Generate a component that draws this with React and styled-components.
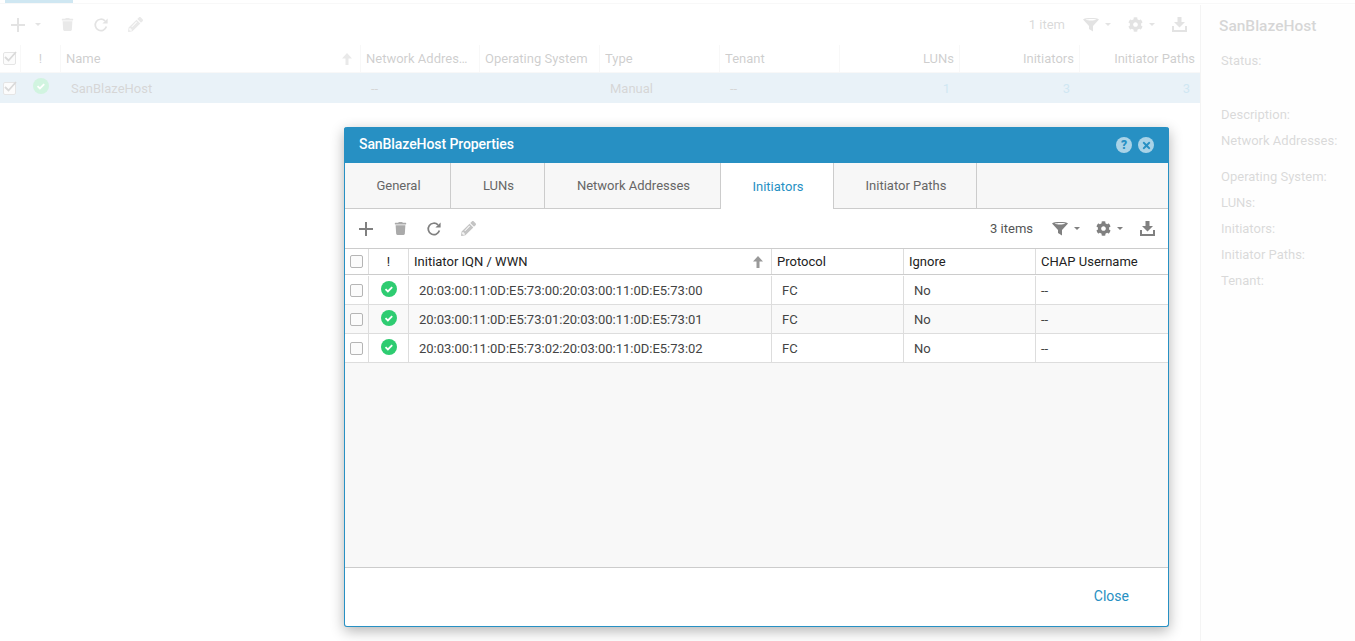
import React from "react";
import styled, { createGlobalStyle } from "styled-components";
import { FaTrash, FaPencilAlt, FaCog, FaTimes } from "react-icons/fa";

const Global = createGlobalStyle`
  html, body { margin: 0; padding: 0; background: #fff; }
  body { font-family: Roboto, "Liberation Sans", sans-serif; font-size: 13px; color: #333; overflow: hidden; }
  * { box-sizing: border-box; }
`;

const Page = styled.div`
  position: relative;
  width: 1355px;
  height: 641px;
  overflow: hidden;
  background: #fff;
  display: flex;
  flex-direction: column;
`;
const TopStrip = styled.div`
  height: 4px;
  flex: none;
  border-bottom: 1px solid #ddd;
  padding-left: 5px;
`;
const TopTab = styled.div`
  width: 68px;
  height: 3px;
  background: #2790c3;
`;
const Main = styled.div`
  flex: 1;
  display: flex;
  min-height: 0;
`;
const ListArea = styled.div`
  width: 1200px;
  flex: none;
`;
const Toolbar = styled.div`
  height: ${p => p.$h}px;
  display: flex;
  align-items: center;
  padding: 0 ${p => p.$right}px 0 ${p => p.$left}px;
  color: #808080;
  background: #fff;
`;
const IconBtn = styled.span`
  width: ${p => p.$w || 34}px;
  height: 20px;
  display: inline-flex;
  align-items: center;
  justify-content: center;
  flex: none;
  color: ${p => p.$c || "#808080"};
`;
const Caret = styled.span`
  width: 0;
  height: 0;
  margin-left: ${p => p.$ml || 6}px;
  border-left: 3px solid transparent;
  border-right: 3px solid transparent;
  border-top: 3px solid #808080;
`;
const Spacer = styled.div`
  flex: 1;
`;
const Count = styled.span`
  color: #555;
  font-size: 13px;
  margin-right: ${p => p.$mr}px;
`;
const Grid = styled.div`
  display: grid;
  grid-template-columns: ${p => p.$cols};
  height: ${p => p.$h}px;
  background: ${p => p.$bg || "transparent"};
  border-bottom: ${p => p.$line ? "1px solid #ddd" : "none"};
`;
const HeadCell = styled.div`
  display: flex;
  align-items: center;
  justify-content: ${p => p.$align === "center" ? "center" : p.$align === "right" ? "flex-end" : "space-between"};
  padding: 0 5px;
  font-size: 13px;
  font-weight: 400;
  color: #222;
  white-space: nowrap;
  overflow: hidden;
  min-width: 0;
  border-right: ${p => p.$last ? "none" : "1px solid #ddd"};
`;
const HeadLabel = styled.span`
  overflow: hidden;
  text-overflow: ellipsis;
  min-width: 0;
`;
const Cell = styled.div`
  display: flex;
  align-items: center;
  justify-content: ${p => p.$align === "center" ? "center" : p.$align === "right" ? "flex-end" : "flex-start"};
  padding: ${p => p.$pad || "0 10px"};
  font-size: 13px;
  color: ${p => p.$link ? "#2790c3" : "#444"};
  white-space: nowrap;
  border-right: ${p => p.$line ? "1px solid #ddd" : "none"};
`;
const Box = styled.span`
  width: 13px;
  height: 13px;
  flex: none;
  display: inline-flex;
  align-items: center;
  justify-content: center;
  background: #fbfbfb;
  border: 1px solid #b5b5b5;
  border-radius: 2px;
`;
const TickBox = styled(Box)`
  position: relative;
  margin-right: 2px;
  background: #f2f2f2;
  border-color: #888;
`;
const TickMark = styled.svg`
  position: absolute;
  left: -1px;
  top: -3px;
`;
const SidePanel = styled.aside`
  flex: 1;
  background: #f8f8f8;
  border-left: 1px solid #ccc;
  margin-top: 1px;
  padding: 11px 0 0 18px;
`;
const SideTitle = styled.div`
  font-size: 15.5px;
  font-weight: 500;
  color: #444;
  height: 20px;
  line-height: 20px;
  margin-bottom: 16px;
`;
const SideLabel = styled.div`
  height: 26px;
  line-height: 18px;
  font-size: 13px;
  color: #555;
  padding-left: 2px;
  margin-bottom: ${p => p.$mb || 0}px;
`;
const Scrim = styled.div`
  position: absolute;
  inset: 0;
  background: rgba(255, 255, 255, .78);
`;
const Modal = styled.section`
  position: absolute;
  left: 344px;
  top: 127px;
  width: 825px;
  height: 500px;
  background: #fff;
  border: 1px solid #2790c3;
  border-top: none;
  border-radius: 3px;
  box-shadow: 0 4px 14px rgba(0, 0, 0, .3);
  display: flex;
  flex-direction: column;
`;
const ModalHead = styled.header`
  height: 36px;
  flex: none;
  margin: 0 -1px;
  padding: 0 15px 2px 15px;
  background: #2790c3;
  border-radius: 3px 3px 0 0;
  display: flex;
  align-items: center;
  justify-content: space-between;
  color: #fff;
  font-size: 14px;
  font-weight: 500;
  letter-spacing: -.08px;
`;
const HeadIcons = styled.div`
  display: flex;
  gap: 6px;
  margin-top: 2px;
`;
const Round = styled.span`
  width: 16px;
  height: 16px;
  border-radius: 50%;
  background: #a9d3e7;
  color: #2790c3;
  display: inline-flex;
  align-items: center;
  justify-content: center;
  font-size: 12px;
  font-weight: 900;
`;
const Tabs = styled.nav`
  height: 46px;
  flex: none;
  display: flex;
  background: #f7f7f7;
  border-bottom: 1px solid #ccc;
`;
const Tab = styled.div`
  width: ${p => p.$w}px;
  height: ${p => p.$active ? 46 : 45}px;
  flex: none;
  display: flex;
  align-items: center;
  justify-content: center;
  padding-left: 2px;
  font-size: 13px;
  color: ${p => p.$active ? "#2790c3" : "#666"};
  background: ${p => p.$active ? "#fff" : "transparent"};
  border-right: 1px solid #ccc;
`;
const TableWrap = styled.div`
  flex: 1;
  min-height: 0;
  background: #f8f8f8;
  border-top: 1px solid #ccc;
`;
const ModalRow = styled(Grid)`
  background: ${p => p.$alt ? "#f9f9f9" : "#fff"};
  border-bottom: 1px solid #ddd;
  padding-top: ${p => p.$top || 0}px;
`;
const HeadGrid = styled(Grid)`
  background: #fff;
  border-bottom: 1px solid #ccc;
`;
const SortArrow = styled.svg`
  margin-right: 3px;
  flex: none;
`;
const Footer = styled.footer`
  height: 59px;
  flex: none;
  border-top: 1px solid #ccc;
  padding: 0 39px 2px 0;
  display: flex;
  align-items: center;
  justify-content: flex-end;
  color: #2790c3;
  font-size: 14px;
`;

const Plus = ({ s = 16 }) => (
  <svg width={s} height={s} viewBox="0 0 16 16"><path d="M7 1h2v6h6v2H9v6H7V9H1V7h6z" fill="currentColor" /></svg>
);
const Refresh = () => (
  <svg width="16" height="16" viewBox="0 0 16 16" fill="none">
    <path d="M13.4 9.600A5.700 5.700 0 1 1 12 3.900" stroke="currentColor" strokeWidth="1.700" />
    <path d="M14.600 1.400v5.200H9.400z" fill="currentColor" />
  </svg>
);
const Funnel = () => (
  <svg width="16" height="14" viewBox="0 0 16 14">
    <path fillRule="evenodd" d="M0 1.400C1 .4 4 0 8 0s7 .4 8 1.400L10 8v5.500L6 11V8zM2.600 1.700C4 2.200 6 2.400 8 2.400s4-.2 5.400-.7C12 1.300 10 1.100 8 1.100s-4 .2-5.400.6z" fill="currentColor" />
  </svg>
);
const Download = () => (
  <svg width="15" height="15" viewBox="0 0 15 15">
    <path d="M5.500 0h4v5H13L7.500 10.500 2 5h3.500z M0 9h2v4h11V9h2v6H0z" fill="currentColor" />
  </svg>
);
const Status = () => (
  <svg width="16" height="16" viewBox="0 0 16 16">
    <circle cx="8" cy="8" r="8" fill="#2ecc71" />
    <path d="M4.500 8.200l2.400 2.300 4.300-4.400" fill="none" stroke="#fff" strokeWidth="1.800" />
  </svg>
);
const Arrow = () => (
  <SortArrow width="10" height="12" viewBox="0 0 10 12"><path d="M5 0l5 5.500H6.500V12h-3V5.500H0z" fill="#999" /></SortArrow>
);
const Tick = () => (
  <TickMark width="15" height="13" viewBox="0 0 15 13">
    <path d="M2 7l3.500 3.500L13 2" fill="none" stroke="#555" strokeWidth="1.800" />
  </TickMark>
);

const ListCols = "21px 40px 300px 119px 120px 120px 120px 120px 120px 120px";
const ModalCols = "24px 40px 363px 132px 132px 1fr";
const rows = ["00", "01", "02"];
const wwn = s => `20:03:00:11:0D:E5:73:${s}:20:03:00:11:0D:E5:73:${s}`;

export default function App() {
  return (
    <Page>
      <Global />
      <TopStrip><TopTab /></TopStrip>
      <Main>
        <ListArea>
          <Toolbar $h={41} $left={10} $right={13}>
            <Plus />
            <Caret $ml={9} />
            <IconBtn $w={16} />
            <IconBtn $w={20} $c="#999"><FaTrash size={13} /></IconBtn>
            <IconBtn $w={47}><Refresh /></IconBtn>
            <IconBtn $w={22} $c="#999"><FaPencilAlt size={15} /></IconBtn>
            <Spacer />
            <Count $mr={18}>1 item</Count>
            <Funnel />
            <Caret />
            <IconBtn $w={17} />
            <FaCog size={15} />
            <Caret />
            <IconBtn $w={17} />
            <Download />
          </Toolbar>
          <Grid $cols={ListCols} $h={28} $line>
            <HeadCell $align="center"><TickBox><Tick /></TickBox></HeadCell>
            <HeadCell $align="center">!</HeadCell>
            <HeadCell><HeadLabel>Name</HeadLabel><Arrow /></HeadCell>
            <HeadCell><HeadLabel>Network Addresses</HeadLabel></HeadCell>
            <HeadCell><HeadLabel>Operating System</HeadLabel></HeadCell>
            <HeadCell><HeadLabel>Type</HeadLabel></HeadCell>
            <HeadCell><HeadLabel>Tenant</HeadLabel></HeadCell>
            <HeadCell $align="right">LUNs</HeadCell>
            <HeadCell $align="right">Initiators</HeadCell>
            <HeadCell $align="right" $last>Initiator Paths</HeadCell>
          </Grid>
          <Grid $cols={ListCols} $h={30} $bg="#9bc3df">
            <Cell $align="center" $pad="0 1px 0 0"><TickBox><Tick /></TickBox></Cell>
            <Cell $align="center" $pad="0 0 4px 0"><Status /></Cell>
            <Cell>SanBlazeHost</Cell>
            <Cell>--</Cell>
            <Cell />
            <Cell>Manual</Cell>
            <Cell>--</Cell>
            <Cell $align="right" $link>1</Cell>
            <Cell $align="right" $link>3</Cell>
            <Cell $align="right" $link>3</Cell>
          </Grid>
        </ListArea>
        <SidePanel>
          <SideTitle>SanBlazeHost</SideTitle>
          <SideLabel $mb={28}>Status:</SideLabel>
          <SideLabel>Description:</SideLabel>
          <SideLabel $mb={10}>Network Addresses:</SideLabel>
          <SideLabel>Operating System:</SideLabel>
          <SideLabel>LUNs:</SideLabel>
          <SideLabel>Initiators:</SideLabel>
          <SideLabel>Initiator Paths:</SideLabel>
          <SideLabel>Tenant:</SideLabel>
        </SidePanel>
      </Main>
      <Scrim />
      <Modal>
        <ModalHead>
          <span>SanBlazeHost Properties</span>
          <HeadIcons>
            <Round>?</Round>
            <Round><FaTimes size={11} /></Round>
          </HeadIcons>
        </ModalHead>
        <Tabs>
          <Tab $w={106}>General</Tab>
          <Tab $w={94}>LUNs</Tab>
          <Tab $w={176}>Network Addresses</Tab>
          <Tab $w={113} $active>Initiators</Tab>
          <Tab $w={143}>Initiator Paths</Tab>
        </Tabs>
        <Toolbar $h={39} $left={13} $right={13}>
          <Plus />
          <IconBtn $w={8} />
          <IconBtn $w={36} $c="#aaa"><FaTrash size={13} /></IconBtn>
          <IconBtn $w={31}><Refresh /></IconBtn>
          <IconBtn $w={39} $c="#c4c4c4"><FaPencilAlt size={15} /></IconBtn>
          <Spacer />
          <Count $mr={19}>3 items</Count>
          <Funnel />
          <Caret />
          <IconBtn $w={16} />
          <FaCog size={15} />
          <Caret />
          <IconBtn $w={17} />
          <Download />
        </Toolbar>
        <TableWrap>
          <HeadGrid $cols={ModalCols} $h={26}>
            <HeadCell $align="center"><Box /></HeadCell>
            <HeadCell $align="center">!</HeadCell>
            <HeadCell><HeadLabel>Initiator IQN / WWN</HeadLabel><Arrow /></HeadCell>
            <HeadCell>Protocol</HeadCell>
            <HeadCell>Ignore</HeadCell>
            <HeadCell $last>CHAP Username</HeadCell>
          </HeadGrid>
          {rows.map((r, i) => (
            <ModalRow key={r} $cols={ModalCols} $h={i === 0 ? 30 : 29} $alt={i === 1} $top={i === 0 ? 1 : 0}>
              <Cell $align="center" $pad="0" $line><Box /></Cell>
              <Cell $align="center" $pad={i === 0 ? "0 0 3px 0" : "0 0 2px 0"} $line><Status /></Cell>
              <Cell $line>{wwn(r)}</Cell>
              <Cell $line>FC</Cell>
              <Cell $line>No</Cell>
              <Cell $pad="0 5px">--</Cell>
            </ModalRow>
          ))}
        </TableWrap>
        <Footer>Close</Footer>
      </Modal>
    </Page>
  );
}
